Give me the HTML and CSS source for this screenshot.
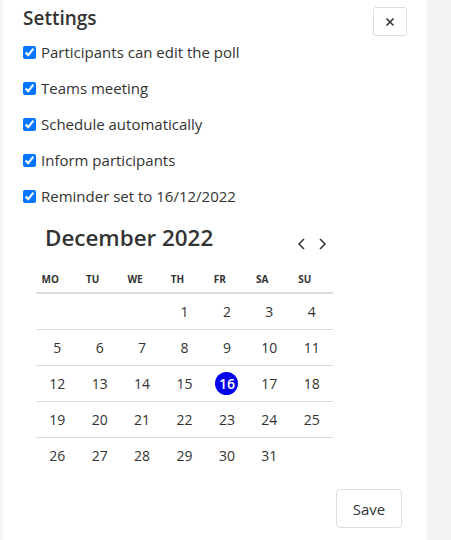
FILE: index.html
```html
<!DOCTYPE html>
<html lang="en">
<head>
<meta charset="utf-8">
<title>Settings</title>
<link rel="stylesheet" href="styles.css">
</head>
<body>
<div class="panel">
  <div class="header">
    <h2 class="title">Settings</h2>
    <button class="close" aria-label="Close">
      <svg width="10" height="10" viewBox="0 0 10 10"><path d="M1.5 1.5 L8.5 8.5 M8.5 1.5 L1.5 8.5" stroke="#333" stroke-width="1.6" fill="none"/></svg>
    </button>
  </div>
  <ul class="options">
    <li><label><input type="checkbox" checked>Participants can edit the poll</label></li>
    <li><label><input type="checkbox" checked>Teams meeting</label></li>
    <li><label><input type="checkbox" checked>Schedule automatically</label></li>
    <li><label><input type="checkbox" checked>Inform participants</label></li>
    <li><label><input type="checkbox" checked>Reminder set to 16/12/2022</label></li>
  </ul>
  <div class="calendar">
    <div class="cal-head">
      <div class="month">December 2022</div>
      <div class="nav">
        <button class="arrow" aria-label="Previous month"><svg width="9" height="12" viewBox="0 0 9 12"><path d="M7 1 L2 6 L7 11" stroke="#333" stroke-width="1.5" fill="none"/></svg></button>
        <button class="arrow" aria-label="Next month"><svg width="9" height="12" viewBox="0 0 9 12"><path d="M2 1 L7 6 L2 11" stroke="#333" stroke-width="1.5" fill="none"/></svg></button>
      </div>
    </div>
    <table class="days">
      <thead>
        <tr><th>MO</th><th>TU</th><th>WE</th><th>TH</th><th>FR</th><th>SA</th><th>SU</th></tr>
      </thead>
      <tbody>
        <tr><td></td><td></td><td></td><td>1</td><td>2</td><td>3</td><td>4</td></tr>
        <tr><td>5</td><td>6</td><td>7</td><td>8</td><td>9</td><td>10</td><td>11</td></tr>
        <tr><td>12</td><td>13</td><td>14</td><td>15</td><td><span class="selected">16</span></td><td>17</td><td>18</td></tr>
        <tr><td>19</td><td>20</td><td>21</td><td>22</td><td>23</td><td>24</td><td>25</td></tr>
        <tr><td>26</td><td>27</td><td>28</td><td>29</td><td>30</td><td>31</td><td></td></tr>
      </tbody>
    </table>
  </div>
  <div class="footer">
    <button class="save">Save</button>
  </div>
</div>
</body>
</html>
```
FILE: styles.css
```css
* { box-sizing: border-box; }
html, body { margin: 0; padding: 0; }
body {
  background: #f3f3f3;
  font-family: "Open Sans", "Noto Sans", sans-serif;
  color: #333;
}
.panel {
  margin-left: 3px;
  width: 424px;
  min-height: 540px;
  background: #fff;
  padding: 0 20px;
}
.header {
  display: flex;
  justify-content: space-between;
  align-items: flex-start;
  height: 34px;
}
.title {
  margin: 0;
  padding-top: 5px;
  font-size: 19px;
  line-height: 26px;
  font-weight: 600;
  color: #333;
}
.close {
  margin-top: 7px;
  width: 34px;
  height: 29px;
  background: #fff;
  border: 1px solid #ddd;
  border-radius: 3px;
  display: flex;
  align-items: center;
  justify-content: center;
  padding: 0;
}
.options {
  list-style: none;
  margin: 0;
  padding: 0;
}
.options li {
  height: 36px;
  display: flex;
  align-items: center;
}
.options label {
  display: flex;
  align-items: center;
  font-size: 15px;
  line-height: 20px;
  color: #333;
}
.options input {
  margin: 0 5px 0 0;
  width: 13px;
  height: 13px;
}
.calendar {
  margin-left: 13px;
  width: 297px;
}
.cal-head {
  display: flex;
  justify-content: space-between;
  align-items: center;
  height: 48px;
  padding-left: 9px;
}
.month {
  font-size: 22.4px;
  font-weight: 600;
  line-height: 30px;
}
.nav {
  display: flex;
  gap: 9px;
  padding-top: 12px;
  padding-right: 5px;
}
.arrow {
  background: none;
  border: 0;
  padding: 0;
  width: 12px;
  height: 14px;
  display: flex;
  align-items: center;
  justify-content: center;
}
.days {
  width: 297px;
  border-collapse: collapse;
  table-layout: fixed;
}
.days th {
  font-size: 10px;
  font-weight: 700;
  height: 31px;
  padding: 4px 14px 0 0;
  text-align: center;
  border-bottom: 2px solid #dcdcdc;
}
.days td {
  height: 36px;
  padding: 0;
  text-align: center;
  font-size: 14px;
  border-bottom: 1px solid #dcdcdc;
}
.days tbody tr:last-child td {
  border-bottom: 0;
}
.selected {
  display: inline-flex;
  align-items: center;
  justify-content: center;
  width: 23px;
  height: 23px;
  border-radius: 50%;
  background: #0000ee;
  color: #fff;
  font-weight: 600;
}
.footer {
  display: flex;
  justify-content: flex-end;
  padding-top: 16px;
  padding-right: 5px;
}
.save {
  width: 66px;
  height: 39px;
  background: #fff;
  border: 1px solid #ddd;
  border-radius: 4px;
  font-family: inherit;
  font-size: 15px;
  color: #333;
}
```
